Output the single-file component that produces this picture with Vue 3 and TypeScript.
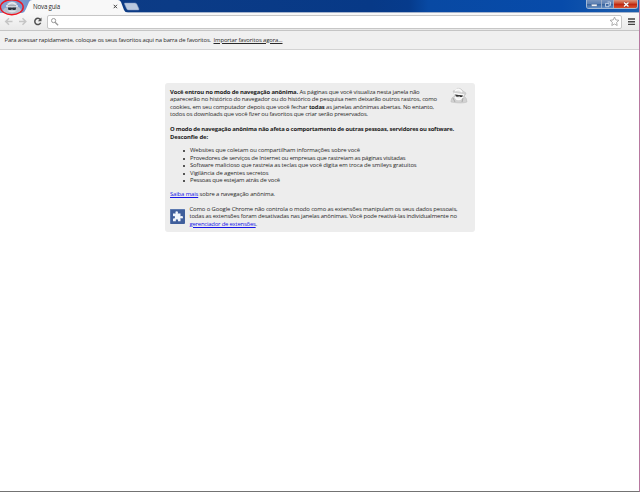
<script setup lang="ts">
import type { Directive } from 'vue'

interface Run { text: string; kind?: 'bold' | 'link' }
interface Line { width: number; runs: Run[] }

// Tracks a single line of text out to its measure.
const vFit: Directive<HTMLElement, number> = {
  mounted(el, { value }) {
    const natural = el.getBoundingClientRect().width
    const count = (el.textContent ?? '').length
    el.style.letterSpacing = `${(value - natural) / count}px`
  },
}

const intro: Line[] = [
  { width: 249.5, runs: [{ text: 'Você entrou no modo de navegação anônima.', kind: 'bold' }, { text: ' As páginas que você visualiza nesta janela não' }] },
  { width: 267, runs: [{ text: 'aparecerão no histórico do navegador ou do histórico de pesquisa nem deixarão outros rastros, como' }] },
  { width: 264, runs: [{ text: 'cookies, em seu computador depois que você fechar ' }, { text: 'todas', kind: 'bold' }, { text: ' as janelas anônimas abertas. No entanto,' }] },
  { width: 198, runs: [{ text: 'todos os downloads que você fizer ou favoritos que criar serão preservados.' }] },
]
const warning: Line[] = [
  { width: 284, runs: [{ text: 'O modo de navegação anônima não afeta o comportamento de outras pessoas, servidores ou software.', kind: 'bold' }] },
  { width: 38, runs: [{ text: 'Desconfie de:', kind: 'bold' }] },
]
const threats: Line[] = [
  { width: 170, runs: [{ text: 'Websites que coletam ou compartilham informações sobre você' }] },
  { width: 215.5, runs: [{ text: 'Provedores de serviços de Internet ou empresas que rastreiam as páginas visitadas' }] },
  { width: 226.5, runs: [{ text: 'Software malicioso que rastreia as teclas que você digita em troca de smileys gratuitos' }] },
  { width: 78.5, runs: [{ text: 'Vigilância de agentes secretos' }] },
  { width: 90, runs: [{ text: 'Pessoas que estejam atrás de você' }] },
]
const more: Line[] = [
  { width: 105, runs: [{ text: 'Saiba mais', kind: 'link' }, { text: ' sobre a navegação anônima.' }] },
]
const extensions: Line[] = [
  { width: 268, runs: [{ text: 'Como o Google Chrome não controla o modo como as extensões manipulam os seus dados pessoais,' }] },
  { width: 267.5, runs: [{ text: 'todas as extensões foram desativadas nas janelas anônimas. Você pode reativá-las individualmente no' }] },
  { width: 67.5, runs: [{ text: 'gerenciador de extensões', kind: 'link' }, { text: '.' }] },
]
</script>

<template>
  <div class="browser">
    <header class="titlebar">
      <svg class="tabs" width="160" height="13" viewBox="0 0 160 13">
        <defs>
          <linearGradient id="glass" x1="0" x2="1" y1="0" y2="0">
            <stop offset="0" stop-color="#8ba3cf" /><stop offset="1" stop-color="#6f92cd" />
          </linearGradient>
        </defs>
        <path d="M0 0H32L25 13H0Z" fill="url(#glass)" />
        <path d="M22 13Q25 12 26 9L29 2Q30 0 32 0H118Q120 0 121 2L124 10Q125 12.500 128 13Z" fill="#f8f8f8" />
        <path d="M124.500 3H135Q136.500 3 137 4.500L139 9Q139.500 10 138 10H128.500Q127 10 126.500 8.500L124.500 4Z" fill="#b9c8df" stroke="#7892bd" stroke-width=".5" />
        <path d="M113.700 4.800l3.300 3.400m0-3.400l-3.300 3.400" stroke="#444" stroke-width="1" />
      </svg>
      <span class="tab-title"><span v-fit="27">Nova guia</span></span>
      <div class="controls">
        <span class="control minimize"><svg width="14" height="9"><path d="M4.500 4.300h5.500v2H4.500z" fill="#fff" stroke="#49638f" stroke-width=".4" /></svg></span>
        <span class="control maximize"><svg width="11" height="9"><path d="M5.500 2h3v3.500H7.500M3.500 3.400h3.500V6.700H3.500z" fill="none" stroke="#c4d3e8" stroke-width=".9" /></svg></span>
        <span class="control close"><svg width="23" height="9"><path d="M10 2.500l4.500 4m0-4l-4.500 4" fill="none" stroke="#7d2b20" stroke-width="2.300" /><path d="M10 2.500l4.500 4m0-4l-4.500 4" fill="none" stroke="#fff" stroke-width="1.500" /></svg></span>
      </div>
      <svg class="spy" width="26" height="18" viewBox="0 0 26 18">
        <path d="M3 11Q3 8 7 7.500L7 3.500Q12-.5 17 3.500L17 6.500Q21 7 21 11Q18 14.500 12 14.500T3 11Z" fill="#b9c0cc" />
        <path d="M8 4.500Q12 1 16 4.500M6 6H18" stroke="#e8ebef" stroke-width="1.500" fill="none" />
        <path d="M7 10.500Q12 14.500 17 10.500" fill="#dfe3e8" />
        <path d="M8 5.700H16" stroke="#858c98" stroke-width=".8" />
        <path d="M7.800 7.600H11.500L12 8 12.500 7.600H16.200L15.500 9.900H12.800L12 9 11.200 9.900H8.500Z" fill="#2a303a" />
        <ellipse cx="11.800" cy="7.200" rx="11.400" ry="7.500" fill="none" stroke="#f0131e" stroke-width="1.400" />
      </svg>
    </header>

    <div class="toolbar">
      <svg class="nav" width="48" height="17" viewBox="0 0 48 17" fill="none">
        <path d="M12.500 8.500H6M9 5.300L5.700 8.500 9 11.700M19 8.500h6.500M22.500 5.300l3.300 3.200-3.300 3.200" stroke="#c5c5c5" stroke-width="1.500" />
        <path d="M40.300 6.500A3.100 3.100 0 1 0 40.700 9.800" stroke="#505050" stroke-width="1.500" />
        <path d="M41.500 4.500v3.700h-3.700z" fill="#505050" />
      </svg>
      <div class="omnibox">
        <svg width="12" height="11" viewBox="0 0 12 11"><circle cx="4.600" cy="4.600" r="2.100" fill="none" stroke="#999" /><path d="M6.100 6.200l3 3" stroke="#999" stroke-width="1.400" /></svg>
        <svg width="11" height="11" viewBox="0 0 11 11"><path d="M5.500 1.100l1.300 2.800 3.100.4-2.300 2.100.6 3.100-2.700-1.500-2.700 1.500.6-3.100L1.100 4.300l3.100-.4z" fill="#fff" stroke="#999" stroke-width=".8" /></svg>
      </div>
      <svg class="menu" width="7" height="8" viewBox="0 0 7 8"><path d="M0 1h7M0 3.700h7M0 6.400h7" stroke="#444" stroke-width="1.400" /></svg>
    </div>

    <div class="bookmarks">
      <span v-fit="206.500">Para acessar rapidamente, coloque os seus favoritos aqui na barra de favoritos.</span>
      <a v-fit="69">Importar favoritos agora...</a>
    </div>

    <main class="page">
      <section class="card">
        <svg class="mascot" width="18" height="18" viewBox="0 0 18 18">
          <path d="M1 14Q1 10 5 9L4 6 3 4 6 3Q7 0 11 2L13 4 16 6Q16 8 14 9Q17 11 17 15Q12 17 1 15Z" fill="#d2d2d2" stroke="#bbb" stroke-width=".5" />
          <path d="M5 4Q9 0 12 5M4 6.500L14 8M5 10Q8 15 13 10" fill="#ededed" stroke="#fafafa" stroke-width="1.500" />
          <path d="M5 7.500l3.500.5.500.2.500-.1 3.500.4-1 1.500-2-.1-.8-.9-1 .7-2-.2z" fill="#333" />
          <path d="M3 11l2 4M13 11l-1 4" stroke="#aaa" />
        </svg>
        <div class="paragraph">
          <p v-for="(line, i) in intro" :key="i"><span v-fit="line.width"><span v-for="(run, j) in line.runs" :key="j" :class="run.kind">{{ run.text }}</span></span></p>
        </div>
        <div class="paragraph warning">
          <p v-for="(line, i) in warning" :key="i"><span v-fit="line.width"><span v-for="(run, j) in line.runs" :key="j" :class="run.kind">{{ run.text }}</span></span></p>
        </div>
        <ul>
          <li v-for="(line, i) in threats" :key="i"><span v-fit="line.width"><span v-for="(run, j) in line.runs" :key="j">{{ run.text }}</span></span></li>
        </ul>
        <p v-for="(line, i) in more" :key="i"><span v-fit="line.width"><span v-for="(run, j) in line.runs" :key="j" :class="run.kind">{{ run.text }}</span></span></p>
        <div class="extension">
          <svg width="15" height="15" viewBox="0 0 15 15">
            <rect width="15" height="15" rx="1" fill="#405f9c" />
            <path d="M.5 14V.5H14.500" fill="none" stroke="#6785b9" stroke-width=".7" />
            <path d="M3 4.500H5.700Q4.800 2.200 6.700 2.200T7.700 4.500H10.500V7.200Q13 6.300 13 8.200T10.500 9.100V12.300H8Q8.700 10.200 6.900 10.200T5.900 12.300H3V9.400Q5 10 5 8.200T3 7.300Z" fill="#f2f6fc" />
          </svg>
          <div>
            <p v-for="(line, i) in extensions" :key="i"><span v-fit="line.width"><span v-for="(run, j) in line.runs" :key="j" :class="run.kind">{{ run.text }}</span></span></p>
          </div>
        </div>
      </section>
    </main>
  </div>
</template>

<style>
body { margin: 0; overflow: hidden; }
</style>

<style scoped>
.browser { box-sizing: border-box; width: 640px; height: 492px; display: flex; flex-direction: column; position: relative; background: #fff; border-right: 1px solid #b878a0; border-bottom: 1px solid #737373; font: 5.9px/7.5px "Open Sans", "Noto Sans", sans-serif; color: #292929; white-space: nowrap; }
p { margin: 0; height: 7.5px; }
svg { display: block; flex: none; }
.titlebar { height: 12px; position: relative; display: flex; background: linear-gradient(90deg, #0d3a83 0%, #0b3b86 27%, #073987 58%, #063b8c 64%, #0849a3 67%, #074baa 88%, #1c5eae 100%); border-bottom: 1px solid #a4b3cc; }
.tabs { flex: none; }
.tab-title { position: absolute; left: 33px; top: 3px; line-height: 8px; font-size: 6.2px; }
.spy { position: absolute; left: 0; top: 0; z-index: 2; }
.controls { margin-left: auto; margin-right: 1px; height: 9px; display: flex; border: 1px solid #a4b9d4; border-top: 0; border-radius: 0 0 3px 3px; overflow: hidden; box-sizing: border-box; }
.control { background: linear-gradient(#7995bf, #5d80b2 45%, #345e99 50%, #6790c4); border-right: 1px solid #9caec9; }
.close { border: 0; background: linear-gradient(#d9947e, #cd5032 42%, #bd210d 50%, #dc5530); }
.toolbar { height: 17px; display: flex; align-items: center; background: linear-gradient(#f8f8f8, #e9e9e9); border-bottom: 1px solid #c5c5c5; }
.omnibox { box-sizing: border-box; width: 575px; height: 14px; display: flex; align-items: center; justify-content: space-between; padding: 0 1px; border: 1px solid #c6c6c6; border-radius: 2px; background: #fff; }
.nav { margin-right: -1px; }
.menu { margin-left: 6px; }
.bookmarks { box-sizing: border-box; height: 19px; display: flex; align-items: center; gap: 2.500px; padding: 1px 0 0 4.500px; background: #f0f0f0; border-bottom: 1px solid #d3d3d3; }
.bookmarks a { text-decoration: underline; text-decoration-thickness: .6px; }
.page { flex: 1; padding: 33px 0 0 165px; }
.card { box-sizing: border-box; width: 310px; height: 149px; padding: 5.500px 5px; position: relative; background: #ededed; border-radius: 3px; }
.mascot { position: absolute; right: 7px; top: 4px; }
.bold { font-weight: 700; color: #222; }
.link { color: #1515e8; text-decoration: underline; text-decoration-thickness: .6px; }
.warning { margin-top: 7.500px; }
ul { margin: 6px 0; padding-left: 20px; list-style: none; }
li { height: 7.500px; position: relative; }
li::before { content: ""; position: absolute; left: -7px; top: 3px; width: 2px; height: 2px; border-radius: 50%; background: #222; }
.extension { display: flex; align-items: center; gap: 4.500px; margin-top: 7.500px; }
</style>
